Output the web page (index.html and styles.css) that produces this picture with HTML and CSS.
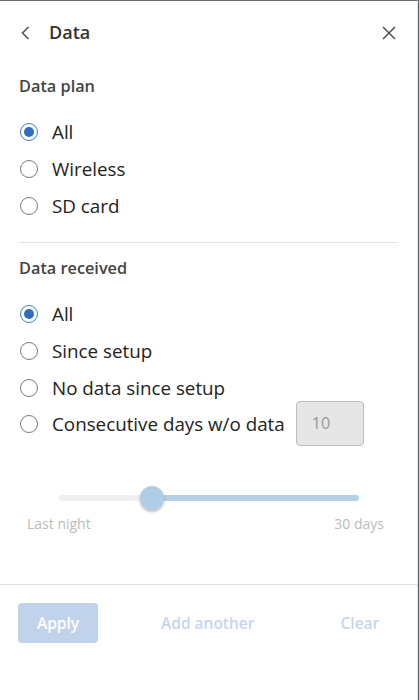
FILE: index.html
```html
<!DOCTYPE html>
<html>
<head>
<meta charset="utf-8">
<link rel="stylesheet" href="styles.css">
</head>
<body>
<div class="panel">
  <div class="header">
    <svg class="icon back" width="12" height="16" viewBox="0 0 12 16"><path d="M8.5 2 L2.5 8 L8.5 14" fill="none" stroke="#555" stroke-width="1.6"/></svg>
    <span class="title">Data</span>
    <svg class="icon close" width="14" height="14" viewBox="0 0 14 14"><path d="M1 1 L13 13 M13 1 L1 13" fill="none" stroke="#555" stroke-width="1.6"/></svg>
  </div>

  <div class="section">
    <div class="section-title">Data plan</div>
    <div class="radios">
      <div class="row"><span class="radio checked"></span><span class="label">All</span></div>
      <div class="row"><span class="radio"></span><span class="label">Wireless</span></div>
      <div class="row"><span class="radio"></span><span class="label">SD card</span></div>
    </div>
  </div>

  <div class="divider"></div>

  <div class="section">
    <div class="section-title second">Data received</div>
    <div class="radios second">
      <div class="row"><span class="radio checked"></span><span class="label">All</span></div>
      <div class="row"><span class="radio"></span><span class="label">Since setup</span></div>
      <div class="row"><span class="radio"></span><span class="label">No data since setup</span></div>
      <div class="row"><span class="radio"></span><span class="label">Consecutive days w/o data</span><div class="days-input">10</div></div>
    </div>

    <div class="slider">
      <div class="track">
        <div class="track-fill"></div>
        <div class="thumb"></div>
      </div>
    </div>
    <div class="slider-labels"><span>Last night</span><span>30 days</span></div>
  </div>

  <div class="footer">
    <div class="btn-apply">Apply</div>
    <div class="btn-link add">Add another</div>
    <div class="btn-link clear">Clear</div>
  </div>
</div>
</body>
</html>
```

FILE: styles.css
```css
html, body {
  margin: 0;
  padding: 0;
  background: #fff;
}
body {
  font-family: "Open Sans", "Noto Sans", sans-serif;
  width: 419px;
  height: 700px;
  overflow: hidden;
}
.panel {
  width: 417px;
  height: 699px;
  border-right: 1px solid #e4e4e4;
  border-top: 1px solid #6a6a6a;
  box-shadow: 1px 0 0 #5a5f66;
  background: #fff;
}
.header {
  height: 63px;
  display: flex;
  align-items: center;
  padding: 0 21px 0 20px;
}
.back {
  margin-right: 17px;
}
.title {
  font-size: 18px;
  font-weight: 600;
  color: #333;
  flex: 1;
  margin-top: -1px;
}
.section {
  padding: 0 19px;
}
.section-title {
  font-size: 16.3px;
  font-weight: 600;
  color: #444;
  line-height: 20px;
  margin-top: 12px;
}
.section-title.second {
  margin-top: 15px;
}
.divider {
  height: 1px;
  background: #e4e4e4;
  margin: 18px 19px 0 19px;
}
.radios {
  margin-top: 17px;
}
.radios.second {
  margin-top: 18px;
}
.row {
  height: 37px;
  display: flex;
  align-items: center;
}
.radios.second .row {
  height: 36.7px;
}
.radio {
  width: 16px;
  height: 16px;
  border: 1.5px solid #7a7a7a;
  border-radius: 50%;
  box-sizing: content-box;
  margin-left: 1px;
  margin-right: 14px;
  position: relative;
  flex: none;
}
.radio.checked {
  border-color: #3d7fd6;
}
.radio.checked::after {
  content: "";
  position: absolute;
  left: 3px;
  top: 3px;
  width: 10px;
  height: 10px;
  border-radius: 50%;
  background: #2f6dbf;
}
.label {
  font-size: 18.8px;
  color: #222;
}
.days-input {
  width: 68px;
  height: 45px;
  margin: -5px 0 -4px 11px;
  border: 1px solid #bdbdbd;
  border-radius: 4px;
  background: #e6e6e6;
  color: #999;
  font-size: 16px;
  line-height: 43px;
  text-indent: 15px;
  box-sizing: border-box;
  flex: none;
}
.slider {
  margin-top: 52px;
  padding: 0 39px 0 40px;
}
.track {
  height: 6px;
  border-radius: 3px;
  background: #f0f0f0;
  position: relative;
}
.track-fill {
  position: absolute;
  left: 93px;
  right: 0;
  top: 0;
  bottom: 0;
  border-radius: 3px;
  background: #b2cfe7;
}
.thumb {
  position: absolute;
  left: 81px;
  top: -9px;
  width: 24px;
  height: 24px;
  border-radius: 50%;
  background: #b0cde6;
  box-shadow: 0 2px 3px rgba(0,0,0,0.25);
}
.slider-labels {
  display: flex;
  justify-content: space-between;
  font-size: 14px;
  color: #bcbcbc;
  margin-top: 13px;
  padding: 0 14px 0 8px;
  line-height: 20px;
}
.footer {
  margin-top: 50px;
  border-top: 1px solid #dcdcdc;
  display: flex;
  align-items: center;
  padding: 18px 0 0 18px;
}
.btn-apply {
  width: 80px;
  height: 40px;
  border-radius: 4px;
  background: #c1d3ea;
  color: #fff;
  font-size: 15.5px;
  font-weight: 600;
  display: flex;
  align-items: center;
  justify-content: center;
}
.btn-link {
  font-size: 15.5px;
  font-weight: 600;
  color: #c6d6ec;
}
.add {
  margin-left: 63px;
}
.clear {
  margin-left: 86px;
}
```
